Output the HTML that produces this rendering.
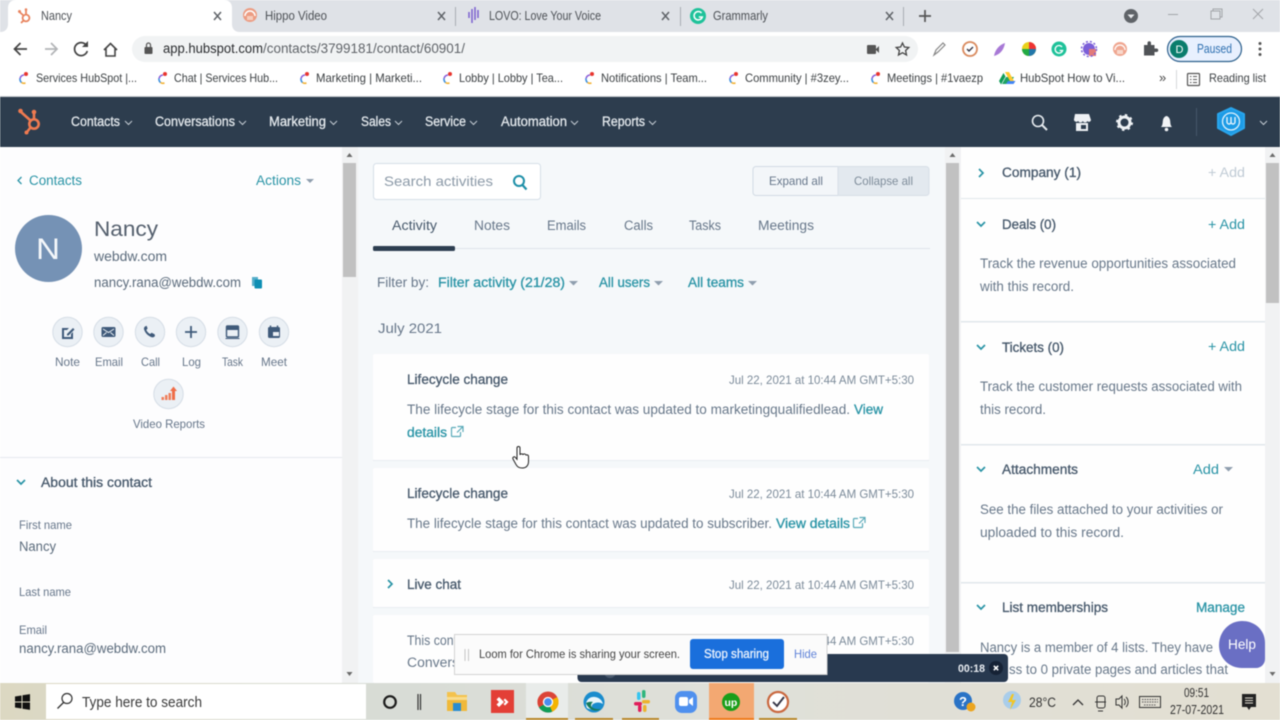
<!DOCTYPE html>
<html><head><meta charset="utf-8"><title>Nancy</title>
<style>
html,body{margin:0;padding:0;width:1280px;height:720px;overflow:hidden;background:#fff}
svg{display:block;position:absolute;left:0;top:0;filter:blur(.45px)}
text{font-family:"Liberation Sans",sans-serif;white-space:pre}
.tab{font-size:12.5px;fill:#4d5156}
.bm{font-size:12px;fill:#3c4043}
.nav{font-size:13.5px;fill:#e3e8ec;stroke:#e3e8ec;stroke-width:.3px}
.t13{font-size:13.5px;fill:#5b6b7c}
.lab{font-size:12px;fill:#66768a}
.teal{font-size:13.5px;fill:#2a94a6}
.tb{font-size:13.5px;fill:#2a94a6;stroke:#2a94a6;stroke-width:.3px}
.h{font-size:13.5px;fill:#46586b;stroke:#46586b;stroke-width:.3px}
.d{font-size:12px;fill:#7c8b9a}
.bd{font-size:13.5px;fill:#68788a}
.tab2{font-size:13.5px;fill:#67778a}
.tk{font-size:12.5px;fill:#333}
.chev{fill:none;stroke:#2a94a6;stroke-width:1.7}
</style></head><body>
<svg width="1280" height="720" viewBox="0 0 1280 720" xmlns="http://www.w3.org/2000/svg">
<!-- chrome tab strip -->
<rect width="1280" height="32" fill="#dfe2e7"/>
<path d="M0 32 C6 32 8 28 8 24 V8 C8 3 11 0 16 0 H224 C229 0 232 3 232 8 V24 C232 28 234 32 240 32 Z" fill="#fff"/>
<g fill="none" stroke="#e8845f" stroke-width="1.8"><circle cx="26" cy="18" r="3.4"/><path d="M26 14.5 V10 M23.5 15.5 L19.5 12 M23.5 20.5 L21 23"/></g><circle cx="19.5" cy="11.5" r="1.5" fill="#e8845f"/><circle cx="26" cy="9.5" r="1.3" fill="#e8845f"/>
<text class="tab" x="41" y="20" textLength="31" lengthAdjust="spacingAndGlyphs">Nancy</text>
<path d="M214 12l7 8M221 12l-7 8" stroke="#5f6368" stroke-width="1.5"/>
<circle cx="250" cy="15" r="7" fill="#ec9c82"/><path d="M245 16a5 5 0 0 1 10 0" fill="none" stroke="#fff" stroke-width="1.5"/><rect x="247" y="16" width="6" height="4" fill="#f6cdbd"/>
<text class="tab" x="265" y="20" textLength="62" lengthAdjust="spacingAndGlyphs">Hippo Video</text>
<path d="M438 12l7 8M445 12l-7 8" stroke="#5f6368" stroke-width="1.5"/>
<rect x="455" y="7" width="1" height="19" fill="#a9adb3"/>
<path d="M469 12v6M472 9v14M475 7v13M478 10v8" stroke="#7a5fd0" stroke-width="1.5"/>
<text class="tab" x="489" y="20" textLength="112" lengthAdjust="spacingAndGlyphs">LOVO: Love Your Voice</text>
<path d="M662 12l7 8M669 12l-7 8" stroke="#5f6368" stroke-width="1.5"/>
<rect x="680" y="7" width="1" height="19" fill="#a9adb3"/>
<circle cx="698" cy="16" r="8" fill="#1fc29a"/><path d="M701.5 13a4.2 4.2 0 1 0 .8 4h-3.5" fill="none" stroke="#fff" stroke-width="1.5"/>
<text class="tab" x="713" y="20" textLength="55" lengthAdjust="spacingAndGlyphs">Grammarly</text>
<path d="M886 12l7 8M893 12l-7 8" stroke="#5f6368" stroke-width="1.5"/>
<rect x="903" y="7" width="1" height="19" fill="#a9adb3"/>
<path d="M925 10v12M919 16h12" stroke="#555" stroke-width="1.7"/>
<circle cx="1131" cy="16" r="7" fill="#5f6368"/><path d="M1127.5 14.500h7l-3.500 4z" fill="#e8eaed"/>
<path d="M1168 14.500h10" stroke="#a2a5a9"/>
<path d="M1211 11h9v8h-9zM1213 11v-2h9v8h-2" fill="none" stroke="#a2a5a9"/>
<path d="M1253 9l10 10M1263 9l-10 10" stroke="#a2a5a9"/>
<!-- toolbar -->
<rect y="32" width="1280" height="32" fill="#fff"/>
<path d="M27 49H15M20.500 43l-6 6 6 6" fill="none" stroke="#444" stroke-width="1.700"/>
<path d="M57 49H45M51 43l6 6-6 6" fill="none" stroke="#b2b4b7" stroke-width="1.700"/>
<path d="M86.500 45.500a6.500 6.500 0 1 0 .8 5.500" fill="none" stroke="#444" stroke-width="1.700"/><path d="M88 41v6h-6z" fill="#444"/>
<path d="M104 50l6.500-6.500L117 50M106 48v8h9v-8" fill="none" stroke="#444" stroke-width="1.600"/>
<rect x="132" y="36" width="786" height="26" rx="13" fill="#f1f3f4"/>
<rect x="144.500" y="47" width="8" height="7" rx="1" fill="#555"/><path d="M146.500 47v-2a2 2 0 0 1 4 0v2" fill="none" stroke="#555" stroke-width="1.200"/>
<text x="163" y="53" font-size="13.500" fill="#2a2c2f" textLength="100" lengthAdjust="spacingAndGlyphs">app.hubspot.com</text>
<text x="263" y="53" font-size="13.500" fill="#5f6368" textLength="202" lengthAdjust="spacingAndGlyphs">/contacts/3799181/contact/60901/</text>
<rect x="867" y="45" width="9" height="9" rx="1" fill="#555"/><path d="M876 49l3-3v7l-3-3z" fill="#555"/>
<path d="M902.500 43l1.900 4 4.400.5-3.200 3 .9 4.500-4-2.300-4 2.300.9-4.500-3.200-3 4.400-.5z" fill="none" stroke="#444" stroke-width="1.300"/>
<path d="M934 55l2-5 7-7 2 2-7 7z" fill="none" stroke="#888" stroke-width="1.200"/>
<circle cx="970" cy="49" r="7" fill="#fff" stroke="#d98a5e" stroke-width="1.800"/><path d="M967 49l2 2 4-4" fill="none" stroke="#334" stroke-width="1.400"/>
<path d="M994 56c1-6 5-11 11-13-1 6-4 11-11 13z" fill="#a879d6"/>
<circle cx="1029" cy="49" r="7" fill="#e9d11b"/><path d="M1029 49V42a7 7 0 0 1 7 7z" fill="#e33"/><path d="M1029 49h7a7 7 0 0 1-7 7z" fill="#27a"/><path d="M1029 49v7a7 7 0 0 1-7-7z" fill="#2a4"/>
<circle cx="1059" cy="49" r="7.500" fill="#1fc29a"/><path d="M1062 47a3.800 3.800 0 1 0 .6 3.500h-3" fill="none" stroke="#fff" stroke-width="1.300"/>
<circle cx="1089" cy="49" r="6" fill="#7c5fd8"/><path d="M1089 49h7v7h-7z" fill="#e27a7a"/><circle cx="1089" cy="49" r="7.500" fill="none" stroke="#7c5fd8" stroke-width="1.500" stroke-dasharray="2 2"/>
<circle cx="1120" cy="49" r="7" fill="#efa690"/><path d="M1115 50a5 5 0 0 1 10 0" fill="none" stroke="#fff" stroke-width="1.300"/><rect x="1117" y="50" width="6" height="4" fill="#f8d8cc"/>
<path d="M1144 45h3.500v-2a1.700 1.700 0 0 1 3.500 0v2h3.500v3.500h2a1.700 1.700 0 0 1 0 3.500h-2v3.500h-10.500z" fill="#505357"/>
<rect x="1167.500" y="36.500" width="74" height="25" rx="12.500" fill="#e8f0fe" stroke="#2b5f8c" stroke-width="1.200"/>
<circle cx="1179" cy="49" r="9" fill="#0a7d6c"/><text x="1175.500" y="53" font-size="11" fill="#fff">D</text>
<text x="1197" y="53" font-size="12.500" fill="#2d6fb0" textLength="35" lengthAdjust="spacingAndGlyphs">Paused</text>
<circle cx="1260" cy="43.500" r="1.500" fill="#555"/><circle cx="1260" cy="49" r="1.500" fill="#555"/><circle cx="1260" cy="54.500" r="1.500" fill="#555"/>
<!-- bookmarks -->
<rect y="64" width="1280" height="32" fill="#fff"/>
<g id="cs"><path d="M24 75a4.500 4.500 0 0 0-4 3.500" fill="none" stroke="#8b5fd8" stroke-width="1.600"/><path d="M20 78.500a4.500 4.500 0 0 0 1.500 4" fill="none" stroke="#3a8fe0" stroke-width="1.600"/><path d="M21.500 82.500a4.500 4.500 0 0 0 4 .5" fill="none" stroke="#f2b233" stroke-width="1.600"/><circle cx="26" cy="74" r="2" fill="#e8352e"/></g>
<use href="#cs" x="139"/><use href="#cs" x="281"/><use href="#cs" x="424"/><use href="#cs" x="566"/><use href="#cs" x="710"/><use href="#cs" x="852"/>
<text class="bm" x="36" y="82" textLength="101" lengthAdjust="spacingAndGlyphs">Services HubSpot |...</text>
<text class="bm" x="174" y="82" textLength="104" lengthAdjust="spacingAndGlyphs">Chat | Services Hub...</text>
<text class="bm" x="316" y="82" textLength="106" lengthAdjust="spacingAndGlyphs">Marketing | Marketi...</text>
<text class="bm" x="459" y="82" textLength="104" lengthAdjust="spacingAndGlyphs">Lobby | Lobby | Tea...</text>
<text class="bm" x="601" y="82" textLength="106" lengthAdjust="spacingAndGlyphs">Notifications | Team...</text>
<text class="bm" x="745" y="82" textLength="104" lengthAdjust="spacingAndGlyphs">Community | #3zey...</text>
<text class="bm" x="887" y="82" textLength="96" lengthAdjust="spacingAndGlyphs">Meetings | #1vaezp</text>
<path d="M1002 84l4-7h8l-4 7z" fill="#1ea362"/><path d="M1005 72h4l5 9h-4z" fill="#ffc92f"/><path d="M1006 84l2-3h7.500l-2 3z" fill="#4285f4"/><path d="M999 81l4.500-8 2 3.500-4.500 8z" fill="#0f9d58"/>
<text class="bm" x="1020" y="82" textLength="105" lengthAdjust="spacingAndGlyphs">HubSpot How to Vi...</text>
<text x="1159" y="82" font-size="13" fill="#444">»</text>
<rect x="1176" y="70" width="1" height="19" fill="#d6d8da"/>
<rect x="1187.500" y="73.500" width="12" height="12" rx="1" fill="none" stroke="#555" stroke-width="1.200"/><path d="M1190 76.500h1.500M1193 76.500h4M1190 79.500h1.500M1193 79.500h4M1190 82.500h1.500M1193 82.500h4" stroke="#555"/>
<text class="bm" x="1209" y="82" textLength="57" lengthAdjust="spacingAndGlyphs">Reading list</text>
<rect y="96" width="1280" height="1" fill="#c8ccd0"/>
<!-- hubspot nav -->
<rect y="97" width="1280" height="50" fill="#2d3d4e"/>
<g fill="none" stroke="#ef7a50" stroke-width="2.600"><circle cx="34" cy="124" r="4.700"/><path d="M34 119v-6M30.500 120.500L21 112M30.500 127.500L27 132"/></g><circle cx="34" cy="112" r="2.300" fill="#ef7a50"/><circle cx="20.500" cy="111" r="2.300" fill="#ef7a50"/><circle cx="26.500" cy="132.500" r="2" fill="#ef7a50"/>
<text class="nav" x="71" y="126" textLength="49" lengthAdjust="spacingAndGlyphs">Contacts</text>
<text class="nav" x="155" y="126" textLength="80" lengthAdjust="spacingAndGlyphs">Conversations</text>
<text class="nav" x="269" y="126" textLength="57" lengthAdjust="spacingAndGlyphs">Marketing</text>
<text class="nav" x="361" y="126" textLength="30" lengthAdjust="spacingAndGlyphs">Sales</text>
<text class="nav" x="425" y="126" textLength="41" lengthAdjust="spacingAndGlyphs">Service</text>
<text class="nav" x="501" y="126" textLength="66" lengthAdjust="spacingAndGlyphs">Automation</text>
<text class="nav" x="602" y="126" textLength="43" lengthAdjust="spacingAndGlyphs">Reports</text>
<g fill="none" stroke="#c3cbd3" stroke-width="1"><path d="M125 121l3.500 3.500 3.500-3.500M239 121l3.500 3.500 3.500-3.500M330 121l3.500 3.500 3.500-3.500M395 121l3.500 3.500 3.500-3.500M470 121l3.500 3.500 3.500-3.500M571 121l3.500 3.500 3.500-3.500M649 121l3.500 3.500 3.500-3.500M1260 121l3.500 3.500 3.500-3.500"/></g>
<circle cx="1038" cy="121" r="5.500" fill="none" stroke="#e6ebef" stroke-width="1.600"/><path d="M1042 125l5 5" stroke="#e6ebef" stroke-width="2"/>
<path d="M1075 114h14l2 6a2 2 0 0 1-3.600 1 2.500 2.500 0 0 1-4.600 0 2.500 2.500 0 0 1-4.600 0 2.500 2.500 0 0 1-4.300-1zM1076 123h12v8h-12z" fill="#eef1f4"/><rect x="1081" y="125" width="5" height="4" fill="#2d3d4e"/>
<circle cx="1124.500" cy="122.500" r="5.500" fill="none" stroke="#eef1f4" stroke-width="3"/><circle cx="1124.500" cy="122.500" r="7.500" fill="none" stroke="#eef1f4" stroke-width="2" stroke-dasharray="2.500 3.400"/>
<path d="M1161 127c2-2 1.500-5 2-7 .4-2.500 2.500-4 3.500-4s3.100 1.500 3.500 4c.5 2 0 5 2 7z" fill="#f2f4f6"/><circle cx="1166.500" cy="129.500" r="1.800" fill="#f2f4f6"/>
<rect x="1196" y="108" width="1" height="28" fill="#45566a"/>
<path d="M1231 108l13 6v14l-13 7-13-7v-14z" fill="#1c9be6" stroke="#2aa5ec" stroke-width="2" stroke-linejoin="round"/><circle cx="1231" cy="121.500" r="8.500" fill="none" stroke="#dff2fd" stroke-width="1.300"/><path d="M1227 117v5a2 2 0 0 0 4 0 2 2 0 0 0 4 0v-5M1231 117v5" fill="none" stroke="#eaf6fd" stroke-width="1.400"/>
<!-- left panel -->
<rect y="147" width="342" height="536" fill="#fdfdfe"/>
<rect x="342" y="147" width="16" height="536" fill="#f1f2f3"/>
<rect x="343" y="163" width="13" height="114" fill="#c1c1c1"/>
<path d="M349.500 153l3 4h-6zM349.500 676l-3-4h6z" fill="#6b6b6b"/>
<path d="M21.500 177l-3.500 3.500 3.500 3.500" fill="none" stroke="#2a94a6" stroke-width="1.300"/>
<text class="teal" x="29" y="185" textLength="53" lengthAdjust="spacingAndGlyphs">Contacts</text>
<text class="teal" x="256" y="185" textLength="45" lengthAdjust="spacingAndGlyphs">Actions</text>
<path d="M306 179h8l-4 4z" fill="#8f9eae"/>
<circle cx="48.500" cy="248.500" r="33.500" fill="#7592b5"/>
<text x="36" y="259" font-size="30" fill="#f4f7fa" textLength="24" lengthAdjust="spacingAndGlyphs">N</text>
<text x="94" y="236" font-size="21" fill="#55606e" textLength="64" lengthAdjust="spacingAndGlyphs">Nancy</text>
<text class="t13" x="94" y="261" textLength="73" lengthAdjust="spacingAndGlyphs">webdw.com</text>
<text class="t13" x="94" y="287" textLength="147" lengthAdjust="spacingAndGlyphs">nancy.rana@webdw.com</text>
<path d="M252 277h6v9h-6z" fill="#55aeca"/><rect x="254.500" y="279.500" width="7.500" height="9" rx="1" fill="#0e8fb4"/>
<g fill="#ebf0f5" stroke="#d5dde6"><circle cx="67.500" cy="332" r="14.700"/><circle cx="108.500" cy="332" r="14.700"/><circle cx="150" cy="332" r="14.700"/><circle cx="191" cy="332" r="14.700"/><circle cx="232.500" cy="332" r="14.700"/><circle cx="274" cy="332" r="14.700"/><circle cx="168.500" cy="394" r="14.700"/></g>
<path d="M62 328h7l-2 2h-3v7h7v-3l2-2v7H62z" fill="#3f5a7a"/><path d="M67 334l6-6 1.500 1.500-6 6h-1.500z" fill="#3f5a7a"/>
<rect x="101.500" y="327" width="14" height="10" rx="1.500" fill="#3f5a7a"/><path d="M103 329l5.500 3.500L114 329M103 335.500l3.500-3M114 335.500l-3.500-3" fill="none" stroke="#ebf0f5"/>
<path d="M145 326.500c-1 1-1.500 2-.5 4 1.200 3 3.500 5 6.500 6.500 2 .7 3 .2 4-1l-.4-1.700-3-1.500-1.500 1.200c-1.600-.8-3-2.300-3.800-4l1.300-1.500-1-2.800z" fill="#3f5a7a"/>
<path d="M191 326v12M185 332h12" stroke="#3f5a7a" stroke-width="1.800"/>
<rect x="226.500" y="326" width="12" height="11" rx="1" fill="none" stroke="#3f5a7a" stroke-width="1.400"/><rect x="226.500" y="326" width="12" height="4" fill="#3f5a7a"/><path d="M225.500 338.500h14" stroke="#3f5a7a"/>
<rect x="268" y="327" width="12" height="11" rx="1.500" fill="#3f5a7a"/><path d="M270.500 325.500v3M277.500 325.500v3" stroke="#3f5a7a" stroke-width="1.400"/><rect x="273" y="332" width="6" height="4" fill="#ebf0f5"/>
<path d="M161.500 400h2.500v-3h-2.500zM165 400h2.500v-5H165zM168.500 400h2.500v-7h-2.500z" fill="#ef7f5c"/><path d="M172 400h3v-9h2l-3.500-4.500L170 391h2z" fill="#ef6d48"/>
<text class="lab" x="55" y="366" textLength="25" lengthAdjust="spacingAndGlyphs">Note</text>
<text class="lab" x="95" y="366" textLength="28" lengthAdjust="spacingAndGlyphs">Email</text>
<text class="lab" x="141" y="366" textLength="19" lengthAdjust="spacingAndGlyphs">Call</text>
<text class="lab" x="182" y="366" textLength="19" lengthAdjust="spacingAndGlyphs">Log</text>
<text class="lab" x="222" y="366" textLength="21" lengthAdjust="spacingAndGlyphs">Task</text>
<text class="lab" x="261" y="366" textLength="26" lengthAdjust="spacingAndGlyphs">Meet</text>
<text class="lab" x="133" y="428" textLength="72" lengthAdjust="spacingAndGlyphs">Video Reports</text>
<rect y="457" width="342" height="1" fill="#e5e9ee"/>
<path class="chev" d="M17 480l4 4 4-4"/>
<text class="h" x="41" y="487" textLength="111" lengthAdjust="spacingAndGlyphs">About this contact</text>
<text class="lab" x="19" y="529" textLength="53" lengthAdjust="spacingAndGlyphs">First name</text>
<text class="t13" x="19" y="551" textLength="37" lengthAdjust="spacingAndGlyphs">Nancy</text>
<text class="lab" x="19" y="596" textLength="52" lengthAdjust="spacingAndGlyphs">Last name</text>
<text class="lab" x="19" y="634" textLength="28" lengthAdjust="spacingAndGlyphs">Email</text>
<text class="t13" x="19" y="653" textLength="147" lengthAdjust="spacingAndGlyphs">nancy.rana@webdw.com</text>
<!-- middle -->
<rect x="358" y="147" width="588" height="536" fill="#f5f8fa"/>
<rect x="945" y="147" width="16" height="536" fill="#f1f2f3"/>
<rect x="946" y="163" width="13" height="489" fill="#c1c1c1"/>
<path d="M952.500 153l3 4h-6z" fill="#6b6b6b"/>
<rect x="373.500" y="163.500" width="167" height="36" rx="3" fill="#fff" stroke="#d6dfe8"/>
<text x="384" y="186" font-size="14" fill="#8c9aa8" textLength="109" lengthAdjust="spacingAndGlyphs">Search activities</text>
<circle cx="519" cy="181" r="5" fill="none" stroke="#1d8fa8" stroke-width="2"/><path d="M522.500 185l4 4.500" stroke="#1d8fa8" stroke-width="2.200"/>
<path d="M838 166.500H756a3 3 0 0 0-3 3v23a3 3 0 0 0 3 3h82z" fill="#f3f6f9" stroke="#d2dbe4"/>
<path d="M838 166.500h88a3 3 0 0 1 3 3v23a3 3 0 0 1-3 3h-88z" fill="#e3e9ef" stroke="#d8dfe7"/>
<text class="lab" x="769" y="185" textLength="54" lengthAdjust="spacingAndGlyphs">Expand all</text>
<text class="lab" x="854" y="185" textLength="59" style="fill:#7d8b99" lengthAdjust="spacingAndGlyphs">Collapse all</text>
<text class="tab2" x="392" y="230" textLength="45" style="fill:#46586b" lengthAdjust="spacingAndGlyphs">Activity</text>
<text class="tab2" x="474" y="230" textLength="36" lengthAdjust="spacingAndGlyphs">Notes</text>
<text class="tab2" x="547" y="230" textLength="39" lengthAdjust="spacingAndGlyphs">Emails</text>
<text class="tab2" x="624" y="230" textLength="29" lengthAdjust="spacingAndGlyphs">Calls</text>
<text class="tab2" x="689" y="230" textLength="32" lengthAdjust="spacingAndGlyphs">Tasks</text>
<text class="tab2" x="758" y="230" textLength="56" lengthAdjust="spacingAndGlyphs">Meetings</text>
<rect x="373" y="248" width="557" height="1" fill="#dfe4ea"/>
<rect x="373" y="246" width="82" height="5" rx="1.500" fill="#2d3e50"/>
<text class="tab2" x="377" y="287" textLength="52" lengthAdjust="spacingAndGlyphs">Filter by:</text>
<text class="tb" x="438" y="287" textLength="127" lengthAdjust="spacingAndGlyphs">Filter activity (21/28)</text>
<path d="M569 281h9l-4.500 4.500z" fill="#8f9eae"/>
<text class="tb" x="599" y="287" textLength="51" lengthAdjust="spacingAndGlyphs">All users</text>
<path d="M654 281h9l-4.500 4.500z" fill="#8f9eae"/>
<text class="tb" x="688" y="287" textLength="56" lengthAdjust="spacingAndGlyphs">All teams</text>
<path d="M748 281h9l-4.500 4.500z" fill="#8f9eae"/>
<text x="378" y="333" font-size="14" fill="#67778a" textLength="64" lengthAdjust="spacingAndGlyphs">July 2021</text>
<g fill="#fefefe"><rect x="373" y="354" width="556" height="106" rx="2"/><rect x="373" y="468" width="556" height="83" rx="2"/><rect x="373" y="559" width="556" height="48" rx="2"/><rect x="373" y="615" width="556" height="68" rx="2"/></g>
<g fill="#e9edf1"><rect x="373" y="460" width="556" height="1"/><rect x="373" y="551" width="556" height="1"/><rect x="373" y="607" width="556" height="1"/></g>
<text class="h" x="407" y="384" textLength="101" lengthAdjust="spacingAndGlyphs">Lifecycle change</text>
<text class="d" x="729" y="384" textLength="185" lengthAdjust="spacingAndGlyphs">Jul 22, 2021 at 10:44 AM GMT+5:30</text>
<text class="bd" x="407" y="414" textLength="443" lengthAdjust="spacingAndGlyphs">The lifecycle stage for this contact was updated to marketingqualifiedlead.</text>
<text class="tb" x="854" y="414" textLength="29" lengthAdjust="spacingAndGlyphs">View</text>
<text class="tb" x="407" y="437" textLength="40" lengthAdjust="spacingAndGlyphs">details</text>
<g id="ext" fill="none" stroke="#5aaab9" stroke-width="1.200"><path d="M456 427.500h-3.500a1 1 0 0 0-1 1v7a1 1 0 0 0 1 1h7a1 1 0 0 0 1-1V432"/><path d="M457.500 426.500h5.500v5.500M463 426.500l-6 6"/></g>
<text class="h" x="407" y="498" textLength="101" lengthAdjust="spacingAndGlyphs">Lifecycle change</text>
<text class="d" x="729" y="498" textLength="185" lengthAdjust="spacingAndGlyphs">Jul 22, 2021 at 10:44 AM GMT+5:30</text>
<text class="bd" x="407" y="528" textLength="365" lengthAdjust="spacingAndGlyphs">The lifecycle stage for this contact was updated to subscriber.</text>
<text class="tb" x="776" y="528" textLength="74" lengthAdjust="spacingAndGlyphs">View details</text>
<use href="#ext" x="402" y="91"/>
<path class="chev" d="M388 580l4 4-4 4"/>
<text class="h" x="407" y="589" textLength="54" lengthAdjust="spacingAndGlyphs">Live chat</text>
<text class="d" x="729" y="589" textLength="185" lengthAdjust="spacingAndGlyphs">Jul 22, 2021 at 10:44 AM GMT+5:30</text>
<text class="bd" x="407" y="645" textLength="50" lengthAdjust="spacingAndGlyphs">This cont</text>
<text class="bd" x="407" y="667" textLength="52" lengthAdjust="spacingAndGlyphs">Convers</text>
<text class="d" x="729" y="645" textLength="185" lengthAdjust="spacingAndGlyphs">Jul 22, 2021 at 10:44 AM GMT+5:30</text>
<!-- right -->
<rect x="961" y="147" width="304" height="536" fill="#fefefe"/>
<rect x="1265" y="147" width="15" height="536" fill="#f1f2f3"/>
<rect x="1266" y="163" width="13" height="140" fill="#c1c1c1"/>
<path d="M1272.500 153l3 4h-6zM1272.500 676l-3-4h6z" fill="#6b6b6b"/>
<g fill="#e1e7ec"><rect x="961" y="198" width="304" height="1"/><rect x="961" y="321" width="304" height="1.500"/><rect x="961" y="444" width="304" height="1.500"/><rect x="961" y="582" width="304" height="1.500"/></g>
<path class="chev" d="M979 169l4 4-4 4"/>
<text class="h" x="1002" y="177" textLength="79" lengthAdjust="spacingAndGlyphs">Company (1)</text>
<text x="1208" y="177" font-size="14" fill="#c0cbd5" textLength="37" lengthAdjust="spacingAndGlyphs">+ Add</text>
<path class="chev" d="M977 222l4 4 4-4"/>
<text class="h" x="1002" y="229" textLength="54" lengthAdjust="spacingAndGlyphs">Deals (0)</text>
<text x="1208" y="229" font-size="14" fill="#2a94a6" textLength="37" lengthAdjust="spacingAndGlyphs">+ Add</text>
<text class="bd" x="980" y="268" textLength="256" lengthAdjust="spacingAndGlyphs">Track the revenue opportunities associated</text>
<text class="bd" x="980" y="291" textLength="94" lengthAdjust="spacingAndGlyphs">with this record.</text>
<path class="chev" d="M977 345l4 4 4-4"/>
<text class="h" x="1002" y="352" textLength="62" lengthAdjust="spacingAndGlyphs">Tickets (0)</text>
<text x="1208" y="351" font-size="14" fill="#2a94a6" textLength="37" lengthAdjust="spacingAndGlyphs">+ Add</text>
<text class="bd" x="980" y="391" textLength="262" lengthAdjust="spacingAndGlyphs">Track the customer requests associated with</text>
<text class="bd" x="980" y="414" textLength="66" lengthAdjust="spacingAndGlyphs">this record.</text>
<path class="chev" d="M977 467l4 4 4-4"/>
<text class="h" x="1002" y="474" textLength="76" lengthAdjust="spacingAndGlyphs">Attachments</text>
<text x="1193" y="474" font-size="14" fill="#2a94a6" textLength="26" lengthAdjust="spacingAndGlyphs">Add</text>
<path d="M1224 467h9l-4.500 4.500z" fill="#8f9eae"/>
<text class="bd" x="980" y="514" textLength="243" lengthAdjust="spacingAndGlyphs">See the files attached to your activities or</text>
<text class="bd" x="980" y="537" textLength="144" lengthAdjust="spacingAndGlyphs">uploaded to this record.</text>
<path class="chev" d="M977 605l4 4 4-4"/>
<text class="h" x="1002" y="612" textLength="106" lengthAdjust="spacingAndGlyphs">List memberships</text>
<text class="tb" x="1196" y="612" textLength="49" lengthAdjust="spacingAndGlyphs">Manage</text>
<text class="bd" x="980" y="652" textLength="233" lengthAdjust="spacingAndGlyphs">Nancy is a member of 4 lists. They have</text>
<text class="bd" x="1009" y="674" textLength="219" lengthAdjust="spacingAndGlyphs">ss to 0 private pages and articles that</text>
<path d="M1242 621c13 0 23 9 23 22v16c0 5-4 9-9 9h-14c-13 0-23-10-23-23s10-24 23-24z" fill="#6a6fc4"/>
<text x="1228" y="649" font-size="13.500" fill="#fff" textLength="28" lengthAdjust="spacingAndGlyphs">Help</text>
<!-- loom -->
<rect x="577.500" y="654" width="430.500" height="28" rx="4" fill="#28394f"/>
<circle cx="610" cy="672" r="6" fill="#4a5a6e"/>
<text x="958" y="672" font-size="11" font-weight="bold" fill="#e8ecf1" textLength="27" lengthAdjust="spacingAndGlyphs">00:18</text>
<circle cx="996" cy="668" r="7" fill="#162235"/><path d="M993.800 665.800l4.400 4.400M998.200 665.800l-4.400 4.400" stroke="#fff" stroke-width="1.500"/>
<rect x="454.500" y="634.500" width="372.500" height="40" fill="#fbfbfb" stroke="#d3d3d3"/>
<path d="M465 649v12M468.500 649v12" stroke="#c6c6c6" stroke-width="1"/>
<text x="479" y="658" font-size="12" fill="#444" textLength="201" lengthAdjust="spacingAndGlyphs">Loom for Chrome is sharing your screen.</text>
<rect x="690" y="639" width="94" height="30" rx="3" fill="#1a6fdc"/>
<text x="704" y="658" font-size="12.500" fill="#eaf2fd" stroke="#eaf2fd" stroke-width=".3" textLength="65" lengthAdjust="spacingAndGlyphs">Stop sharing</text>
<text x="794" y="658" font-size="12" fill="#5f82d8" textLength="23" lengthAdjust="spacingAndGlyphs">Hide</text>
<!-- taskbar -->
<defs><linearGradient id="tbg" x1="0" x2="1" y1="0" y2="0"><stop offset="0" stop-color="#dcd8c2"/><stop offset=".3" stop-color="#d8dcd6"/><stop offset=".55" stop-color="#dfe0d9"/><stop offset="1" stop-color="#e3dfd2"/></linearGradient></defs>
<rect y="683" width="1280" height="37" fill="url(#tbg)"/>
<rect x="46" y="684" width="320" height="35" fill="#fff"/>
<path d="M15 696.500l6.500-1v6h-6.500zM22.500 695.300l7.500-1.200v7.400h-7.500zM15 702.500h6.500v6l-6.500-1zM22.500 702.500H30v7.400l-7.500-1.200z" fill="#111"/>
<circle cx="67" cy="698.500" r="5" fill="none" stroke="#333" stroke-width="1.200"/><path d="M63.500 702.500l-6 6" stroke="#333" stroke-width="1.300"/>
<text x="82" y="707" font-size="15" fill="#3a3a3a" textLength="120" lengthAdjust="spacingAndGlyphs">Type here to search</text>
<circle cx="390" cy="702" r="5.800" fill="none" stroke="#1c1c1c" stroke-width="2.200"/>
<path d="M418 694v16M420.500 694v16" stroke="#333" stroke-width="1.200"/>
<path d="M447 692h8l2 3h10v16h-20z" fill="#f4c24d"/><rect x="447" y="697" width="20" height="3" fill="#f9dc8c"/><rect x="447" y="700" width="20" height="11" fill="#f0b93a"/><rect x="453" y="703" width="8" height="8" fill="#2a8ccf"/>
<rect x="491" y="690" width="23" height="23" fill="#e33f36"/><path d="M499 697l5 5-5 5-2.500-2.500 2.500-2.500-2.500-2.500zM505 698.500l3.500 3.500-3.500 3.500-1.500-1.500 2-2-2-2z" fill="#fff"/>
<rect x="526" y="683" width="42" height="37" fill="#e9ecea"/>
<circle cx="548" cy="702" r="10.500" fill="#db4437"/><path d="M548 702l9.200-5a10.500 10.500 0 0 1-5 14.700z" fill="#f4b400"/><path d="M548 702l4.200 9.700a10.500 10.500 0 0 1-13.300-4.400z" fill="#0f9d58"/><path d="M548 702l-9.100 5.300a10.500 10.500 0 0 1 0-10.500z" fill="#db4437"/><circle cx="548" cy="702" r="4.500" fill="#4a8ef0" stroke="#fff" stroke-width="1.300"/>
<circle cx="594" cy="702" r="10.500" fill="#1a8ccd"/><path d="M587 708c-3-6 2-12 8-11 4 .6 7 3 8 7-3-2-7-2-10 0-2 1.500-1.500 4 1 5-3 .6-5.500 0-7-1z" fill="#eaf6fb"/><path d="M586 703c2 6 9 10 15 6-4 .5-8 0-10-3 0-2 .5-3 2-4-3-.5-5 0-7 1z" fill="#157a5b"/>
<rect x="637" y="692" width="3.500" height="8" rx="1.700" fill="#36c5f0"/><rect x="642" y="690" width="3.500" height="8" rx="1.700" fill="#2eb67d"/><rect x="634" y="702" width="8" height="3.500" rx="1.700" fill="#e01e5a"/><rect x="642" y="700" width="8" height="3.500" rx="1.700" fill="#ecb22e"/><rect x="638" y="705" width="3.500" height="7" rx="1.700" fill="#e01e5a"/><rect x="643" y="705" width="3.500" height="7" rx="1.700" fill="#ecb22e"/>
<rect x="675" y="691" width="22" height="22" rx="7" fill="#4f90ee"/><rect x="679" y="697" width="9" height="9" rx="2" fill="#fff"/><path d="M689 700l4-3v9l-4-3z" fill="#fff"/>
<rect x="709" y="683" width="45" height="37" fill="#f3a872"/>
<circle cx="731" cy="702" r="9" fill="#1a9e1a"/><text x="724.500" y="706" font-size="10.500" font-weight="bold" fill="#fff">up</text>
<circle cx="778" cy="702" r="10" fill="#fff" stroke="#c9683f" stroke-width="2.200"/><path d="M773 702l4 4 7-9" fill="none" stroke="#334" stroke-width="1.900"/>
<rect x="526" y="718" width="42" height="2" fill="#b8872a"/><rect x="575" y="718" width="38" height="2" fill="#b8872a"/><rect x="622" y="718" width="37" height="2" fill="#b8872a"/><rect x="709" y="718" width="45" height="2" fill="#f07a1a"/><rect x="759" y="718" width="38" height="2" fill="#b8872a"/>
<circle cx="963" cy="701" r="9" fill="#2a73c6"/><text x="959" y="706" font-size="13" font-weight="bold" fill="#fff">?</text><circle cx="971" cy="707" r="4.500" fill="#eca51f"/>
<circle cx="1012" cy="700" r="9" fill="#a9cdea"/><path d="M1012 694l-4 8h4l-2 8 6-10h-4l2-6z" fill="#f3c623"/>
<text x="1029" y="707" font-size="13.500" fill="#333" textLength="27" lengthAdjust="spacingAndGlyphs">28°C</text>
<path d="M1073 705l5-5 5 5" fill="none" stroke="#333" stroke-width="1.300"/>
<rect x="1097" y="696" width="8" height="12" rx="2" fill="none" stroke="#333"/><path d="M1095 702h11M1098 711h5" stroke="#333"/>
<path d="M1116 699h3l3-3v12l-3-3h-3z" fill="none" stroke="#333"/><path d="M1124 699a4 4 0 0 1 0 6M1126 697a7 7 0 0 1 0 10" fill="none" stroke="#333"/>
<rect x="1139.500" y="696.500" width="21" height="11" fill="none" stroke="#333"/><path d="M1142 699.500h16M1142 702h16M1144 705h12" stroke="#555" stroke-dasharray="1.500 1"/>
<text class="tk" x="1184" y="697" textLength="25" lengthAdjust="spacingAndGlyphs">09:51</text>
<text class="tk" x="1170" y="714" textLength="54" lengthAdjust="spacingAndGlyphs">27-07-2021</text>
<path d="M1242 694h14v13h-5l-2 3-2-3h-5z" fill="#222"/><path d="M1245 698h8M1245 700.500h8M1245 703h8" stroke="#e3dfd2"/>
<!-- cursor -->
<path d="M517 448c0-2 3-2 3 0v7c0-1.500 3-1.500 3 0 0-1.500 3-1.500 3 .5 0-1 2.500-1 2.500 1v5c0 4-2.500 6.500-6 6.500s-5-1-6.500-3.500l-3-5.500c-.8-1.500 1-3 2.300-1.700l1.700 2z" fill="#fff" stroke="#222" stroke-width="1"/>
</svg>
</body></html>
